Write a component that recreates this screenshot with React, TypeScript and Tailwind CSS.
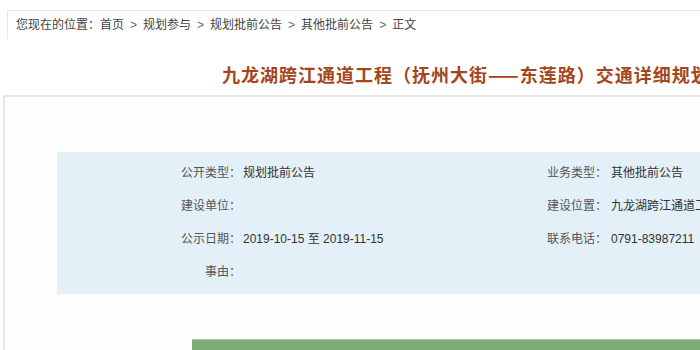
const rows = [
  { l1: "公开类型：", v1: "规划批前公告", l2: "业务类型：", v2: "其他批前公告" },
  { l1: "建设单位：", v1: "", l2: "建设位置：", v2: "九龙湖跨江通道工程（抚州大街——东莲路）" },
  { l1: "公示日期：", v1: "2019-10-15 至 2019-11-15", l2: "联系电话：", v2: "0791-83987211" },
  { l1: "事由：", v1: "", l2: "", v2: "" },
];

const crumbs = ["首页", "规划参与", "规划批前公告", "其他批前公告", "正文"];

export default function App() {
  return (
    <div className="w-[700px] h-[350px] overflow-hidden bg-white font-['Liberation_Sans','Noto_Sans_CJK_SC',sans-serif]">
      {/* breadcrumb */}
      <div className="pt-[10px] pl-[7px]">
        <div className="h-[29px] w-[760px] border-l border-t border-[#e5ebdd] pl-[8px] flex items-center text-[12px] text-[#444] whitespace-nowrap">
          <span>您现在的位置：</span>
          {crumbs.map((c, i) => (
            <span key={c} className="flex items-center">
              {i > 0 && <span className="px-[6px] text-[#666]">&gt;</span>}
              <span>{c}</span>
            </span>
          ))}
        </div>
      </div>

      {/* title */}
      <div className="mt-[25px] pl-[222px] h-[20px] leading-[20px] whitespace-nowrap text-[18px] tracking-[1px] font-bold text-[#a3461c] font-['Noto_Sans_CJK_SC',sans-serif]">
        九龙湖跨江通道工程（抚州大街——东莲路）交通详细规划
      </div>

      {/* content box */}
      <div className="mt-[11px] ml-[3px] w-[760px] h-[300px] border-2 border-r-0 border-[#e6e6e6] bg-[#fdfdfd] pt-[55px] pl-[52px]">
        <div className="w-[700px] h-[142px] bg-[#e3f0f7] pl-[122px] pt-[4px] text-[12px]">
          {rows.map((r) => (
            <div key={r.l1} className="flex h-[33px] items-center whitespace-nowrap">
              <div className="flex w-[368px] shrink-0">
                <span className="w-[64px] text-right text-[#555] pr-[2px]">{r.l1}</span>
                <span className="text-[#333]">{r.v1}</span>
              </div>
              <div className="flex">
                <span className="w-[64px] shrink-0 text-[#555]">{r.l2}</span>
                <span className="text-[#333]">{r.v2}</span>
              </div>
            </div>
          ))}
        </div>
        <div className="mt-[45px] ml-[135px] h-[20px] w-[600px] bg-[#7fac74] border-t border-[#a9c9a0]" />
      </div>
    </div>
  );
}
